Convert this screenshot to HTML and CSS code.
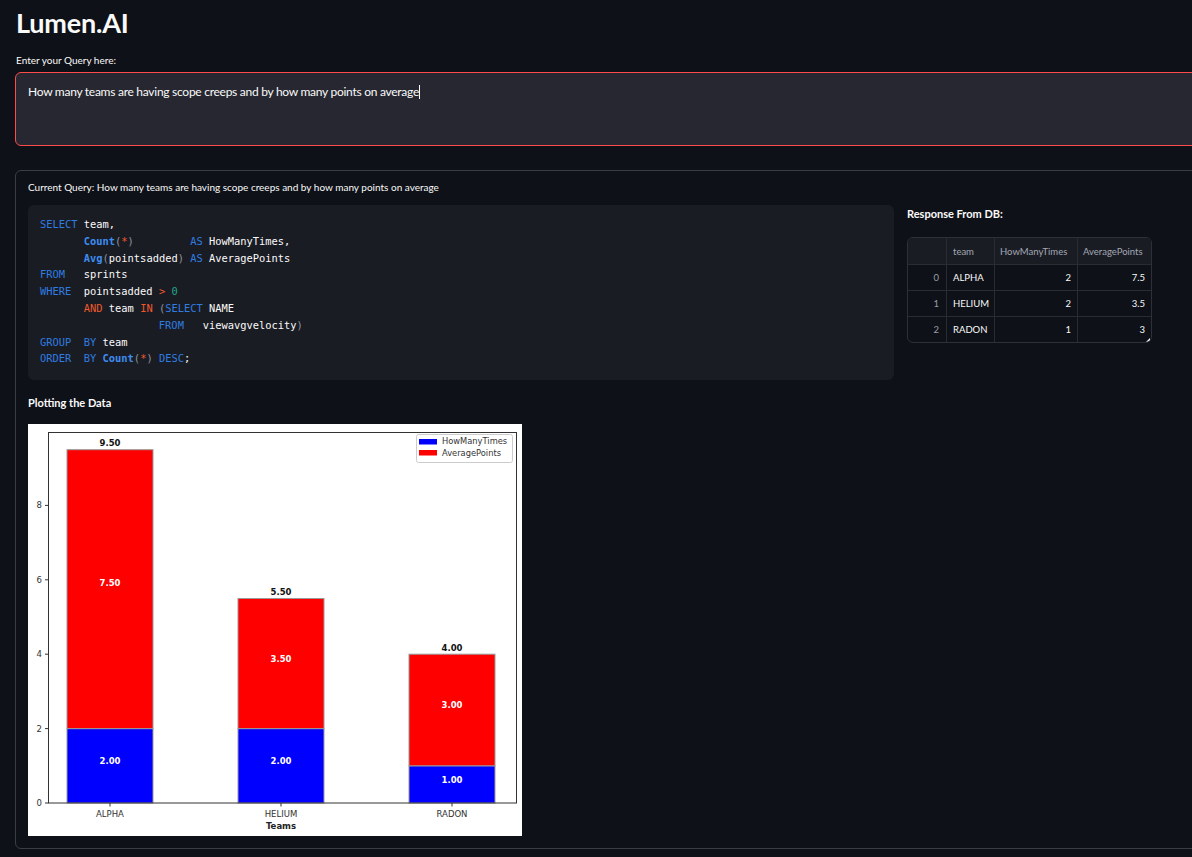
FILE: index.html
```html
<!DOCTYPE html>
<html>
<head>
<meta charset="utf-8">
<link rel="stylesheet" href="styles.css">
</head>
<body>
<main class="app">
  <h1 class="title">Lumen.AI</h1>
  <label class="label">Enter your Query here:</label>
  <div class="textarea"><span>How many teams are having scope creeps and by how many points on average</span><span class="caret"></span></div>

  <section class="panel">
    <p class="current">Current Query: How many teams are having scope creeps and by how many points on average</p>
    <div class="row">
      <div class="code">
        <div class="ln"><span class="kw">SELECT</span> team,</div>
        <div class="ln">       <span class="fn">Count</span><span class="p">(</span><span class="op">*</span><span class="p">)</span>         <span class="kw">AS</span> HowManyTimes,</div>
        <div class="ln">       <span class="fn">Avg</span><span class="p">(</span>pointsadded<span class="p">)</span> <span class="kw">AS</span> AveragePoints</div>
        <div class="ln"><span class="kw">FROM</span>   sprints</div>
        <div class="ln"><span class="kw">WHERE</span>  pointsadded <span class="op">&gt;</span> <span class="num">0</span></div>
        <div class="ln">       <span class="op">AND</span> team <span class="op">IN</span> <span class="p">(</span><span class="kw">SELECT</span> NAME</div>
        <div class="ln">                   <span class="kw">FROM</span>   viewavgvelocity<span class="p">)</span></div>
        <div class="ln"><span class="kw">GROUP</span>  <span class="kw">BY</span> team</div>
        <div class="ln"><span class="kw">ORDER</span>  <span class="kw">BY</span> <span class="fn">Count</span><span class="p">(</span><span class="op">*</span><span class="p">)</span> <span class="kw">DESC</span>;</div>
      </div>
      <div class="side">
        <h3 class="side-title">Response From DB:</h3>
        <div class="table">
          <div class="tr th"><div class="c idx"></div><div class="c team">team</div><div class="c n1">HowManyTimes</div><div class="c n2">AveragePoints</div></div>
          <div class="tr"><div class="c idx">0</div><div class="c team">ALPHA</div><div class="c n1">2</div><div class="c n2">7.5</div></div>
          <div class="tr"><div class="c idx">1</div><div class="c team">HELIUM</div><div class="c n1">2</div><div class="c n2">3.5</div></div>
          <div class="tr"><div class="c idx">2</div><div class="c team">RADON</div><div class="c n1">1</div><div class="c n2">3</div></div>
          <span class="handle"></span>
        </div>
      </div>
    </div>
    <h3 class="plot-title">Plotting the Data</h3>
    <div class="chart">
      <svg width="494" height="412" viewBox="0 0 494 412" font-family="'DejaVu Sans', sans-serif">
        <rect x="0" y="0" width="494" height="412" fill="#fff"/>
        <g stroke="#999" stroke-width="1">
          <rect x="39" y="304.6" width="86" height="74.4" fill="#0000ff"/>
          <rect x="39" y="25.7" width="86" height="278.9" fill="#ff0000"/>
          <rect x="210" y="304.6" width="86" height="74.4" fill="#0000ff"/>
          <rect x="210" y="174.5" width="86" height="130.1" fill="#ff0000"/>
          <rect x="381" y="341.8" width="86" height="37.2" fill="#0000ff"/>
          <rect x="381" y="230.2" width="86" height="111.6" fill="#ff0000"/>
        </g>
        <rect x="20.5" y="8.5" width="468" height="370.5" fill="none" stroke="#333" stroke-width="1"/>
        <g stroke="#333" stroke-width="1">
          <line x1="17" y1="379" x2="20.5" y2="379"/>
          <line x1="17" y1="304.6" x2="20.5" y2="304.6"/>
          <line x1="17" y1="230.2" x2="20.5" y2="230.2"/>
          <line x1="17" y1="155.8" x2="20.5" y2="155.8"/>
          <line x1="17" y1="81.4" x2="20.5" y2="81.4"/>
          <line x1="82" y1="379" x2="82" y2="382.5"/>
          <line x1="253" y1="379" x2="253" y2="382.5"/>
          <line x1="424" y1="379" x2="424" y2="382.5"/>
        </g>
        <g font-size="8.5" fill="#333" text-anchor="end">
          <text x="14" y="382">0</text>
          <text x="14" y="307.6">2</text>
          <text x="14" y="233.2">4</text>
          <text x="14" y="158.8">6</text>
          <text x="14" y="84.4">8</text>
        </g>
        <g font-size="8.5" fill="#333" text-anchor="middle">
          <text x="82" y="393">ALPHA</text>
          <text x="253" y="393">HELIUM</text>
          <text x="424" y="393">RADON</text>
        </g>
        <text x="253" y="405" font-size="8.5" font-weight="bold" fill="#222" text-anchor="middle">Teams</text>
        <g font-size="8.5" font-weight="bold" fill="#111" text-anchor="middle">
          <text x="82" y="22">9.50</text>
          <text x="253" y="171">5.50</text>
          <text x="424" y="227">4.00</text>
        </g>
        <g font-size="8.5" font-weight="bold" fill="#fff" text-anchor="middle">
          <text x="82" y="162">7.50</text>
          <text x="253" y="238">3.50</text>
          <text x="424" y="284">3.00</text>
          <text x="82" y="340">2.00</text>
          <text x="253" y="340">2.00</text>
          <text x="424" y="359">1.00</text>
        </g>
        <rect x="388.5" y="10.5" width="96" height="28" rx="2" fill="#fff" stroke="#ccc" stroke-width="1"/>
        <rect x="391" y="15" width="18" height="5.5" fill="#0000ff"/>
        <rect x="391" y="26" width="18" height="5.5" fill="#ff0000"/>
        <g font-size="8.3" fill="#333">
          <text x="414" y="20">HowManyTimes</text>
          <text x="414" y="32">AveragePoints</text>
        </g>
      </svg>
    </div>
  </section>
</main>
</body>
</html>
```

FILE: styles.css
```css
html, body {
  margin: 0;
  padding: 0;
  background: #0e1117;
  overflow: hidden;
}
body {
  font-family: "Lato", "Open Sans", sans-serif;
  color: #fafafa;
  width: 1192px;
  height: 857px;
}
.app {
  width: 1240px;
  padding-left: 15px;
}
.title {
  margin: 0;
  padding-top: 7px;
  padding-left: 1px;
  font-size: 27px;
  line-height: 32px;
  font-weight: 700;
  letter-spacing: -0.2px;
}
.label {
  display: block;
  margin-top: 15px;
  padding-left: 1px;
  font-size: 10px;
  line-height: 13px;
}
.textarea {
  margin-top: 5px;
  border: 1px solid #ff4b4b;
  border-radius: 6px;
  background: #262730;
  padding: 11px 12px 0;
  box-sizing: border-box;
  height: 74px;
  font-size: 12px;
  line-height: 16px;
  letter-spacing: -0.27px;
  display: flex;
  align-items: flex-start;
}
.caret {
  display: inline-block;
  width: 1px;
  height: 14px;
  background: #fafafa;
  margin-top: 1px;
}
.panel {
  margin-top: 24px;
  border: 1px solid #3b3d45;
  border-radius: 6px;
  padding: 10px 12px 12px;
  height: 679px;
  box-sizing: border-box;
}
.current {
  margin: 0;
  font-size: 10px;
  line-height: 12px;
}
.row {
  display: grid;
  grid-template-columns: 866px 1fr;
  gap: 13px;
  margin-top: 12px;
}
.code {
  background: #1a1c24;
  border-radius: 6px;
  padding: 11px 12px 11px;
  height: 175px;
  box-sizing: border-box;
  font-family: "DejaVu Sans Mono", "Liberation Mono", monospace;
  font-size: 10.4px;
  line-height: 16.8px;
  color: #fafafa;
}
.ln {
  white-space: pre;
  height: 16.8px;
}
.kw { color: #2f7de1; }
.fn { color: #3d8cf0; font-weight: 700; }
.op { color: #f0592b; }
.num { color: #21a88a; }
.p { color: #8f949c; }
.side-title {
  margin: 2px 0 0;
  font-size: 11px;
  line-height: 14px;
  font-weight: 700;
}
.table {
  position: relative;
  margin-top: 16px;
  width: 243px;
  border: 1px solid #2e3038;
  border-radius: 6px;
  overflow: hidden;
  font-size: 9.5px;
}
.tr {
  display: grid;
  grid-template-columns: 38px 48px 83px 74px;
  height: 25px;
  border-top: 1px solid #2a2c34;
}
.tr:first-child { border-top: 0; }
.th {
  height: 26px;
  background: #1a1c24;
  color: #a3a8b4;
}
.c {
  display: flex;
  align-items: center;
  padding: 0 6px;
  border-left: 1px solid #2a2c34;
  box-sizing: border-box;
}
.c.idx { border-left: 0; justify-content: flex-end; color: #9a9ea8; padding-right: 7px; }
.c.n1, .c.n2 { justify-content: flex-end; padding-right: 6px; }
.th .c.n1, .th .c.n2 { justify-content: flex-start; padding-left: 5px; }
.handle {
  position: absolute;
  right: 1px;
  bottom: 0;
  width: 0;
  height: 0;
  border-left: 4px solid transparent;
  border-bottom: 4px solid #fafafa;
}
.plot-title {
  margin: 16px 0 0;
  font-size: 11px;
  line-height: 14px;
  font-weight: 700;
}
.chart {
  margin-top: 14px;
  width: 494px;
  height: 412px;
}
.chart svg { display: block; }
```
